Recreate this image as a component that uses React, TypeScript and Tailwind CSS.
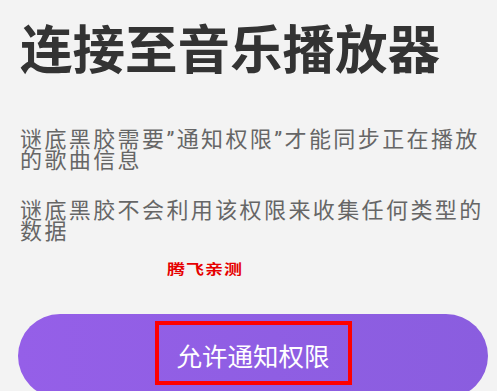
export default function App() {
  return (
    <main
      className="h-[391px] overflow-hidden bg-[#f3f3f3]"
      style={{ fontFamily: 'Roboto, "Noto Sans CJK SC", sans-serif' }}
    >
      <div className="pl-[20px] pr-[10px]">
        <h1 className="mt-[25px] text-[52.5px] leading-none font-bold text-[#333333]">
          连接至音乐播放器
        </h1>

        <p className="mt-[51px] text-[22px] leading-[21.5px] tracking-[2.4px] text-[#666666]">
          谜底黑胶需要”通知权限”才能同步正在播放的歌曲信息
        </p>
        <p className="mt-[28px] text-[22px] leading-[21.5px] tracking-[2.4px] text-[#666666]">
          谜底黑胶不会利用该权限来收集任何类型的数据
        </p>
      </div>

      {/* watermark */}
      <div className="mt-[20px] ml-[167px] text-[18px] leading-none font-bold tracking-[1px] text-[#e60000] scale-y-[0.75] origin-top">
        腾飞亲测
      </div>

      <button className="mt-[33px] ml-[18px] w-[470px] h-[84px] rounded-full bg-gradient-to-r from-[#955fe8] to-[#8a5ddf] flex justify-center items-start pt-[7px]">
        <span className="w-[197px] h-[64px] border-4 border-[#ff0000] flex justify-center items-center pt-[10px] text-[25.5px] leading-none text-white">
          允许通知权限
        </span>
      </button>
    </main>
  );
}
